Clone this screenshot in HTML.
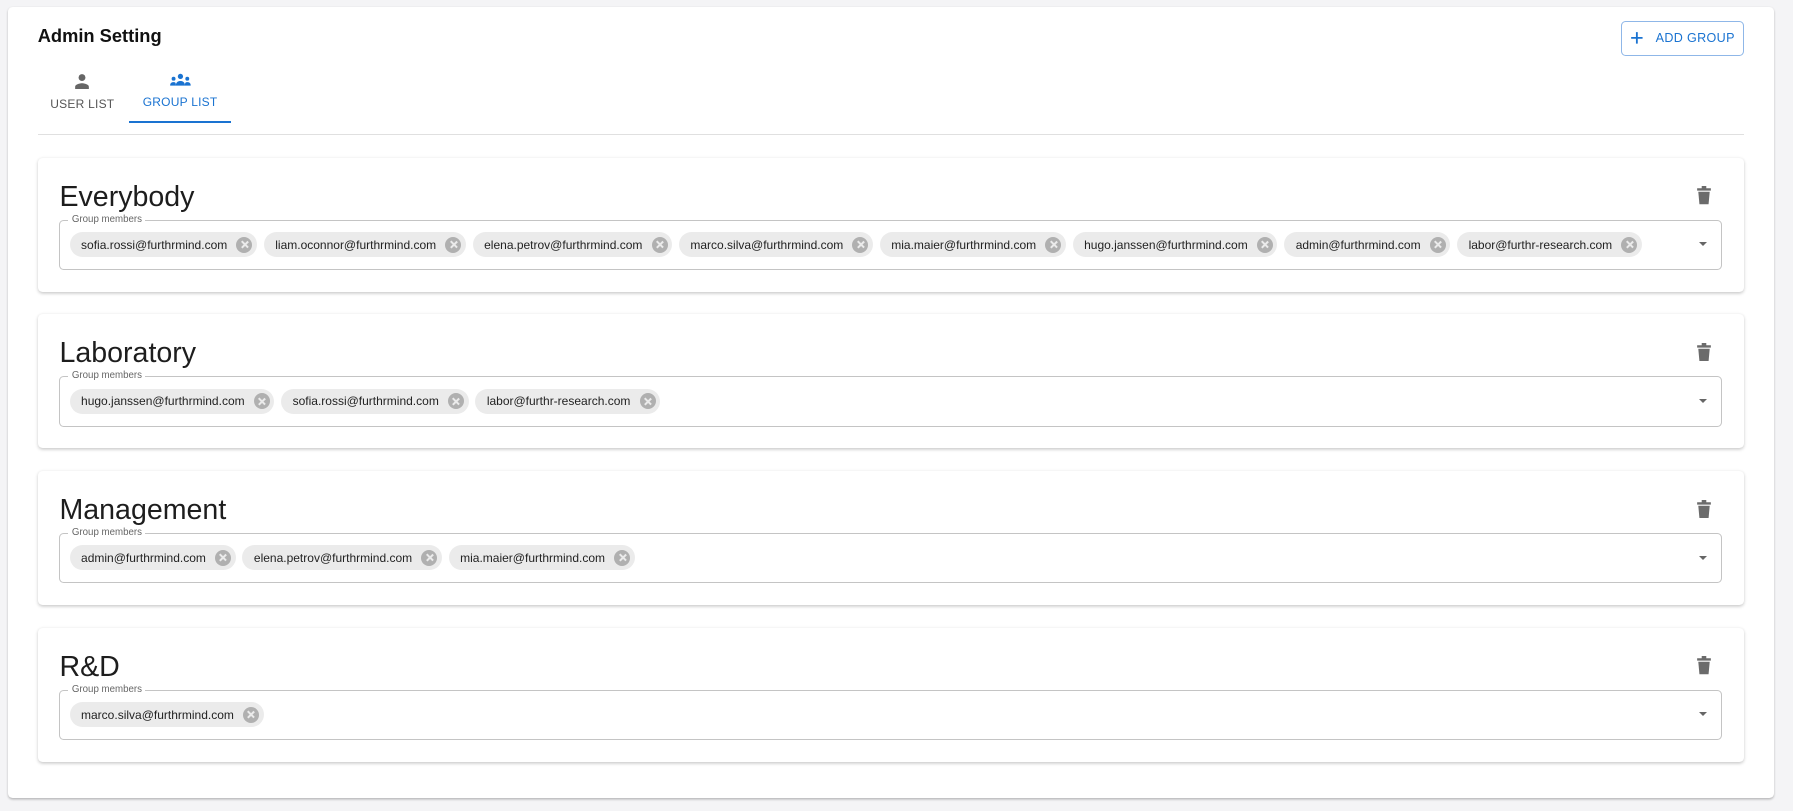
<!DOCTYPE html>
<html><head><meta charset="utf-8">
<style>
html,body{margin:0;padding:0;}
body{width:1793px;height:811px;overflow:hidden;background:#f4f4f6;font-family:"Liberation Sans",Arial,sans-serif;}
.main{position:absolute;left:7px;top:6px;width:1544px;height:692px;background:#fff;border-radius:4px;box-shadow:0 1px 2px rgba(0,0,0,.25);}
.title{position:absolute;left:26px;top:16px;font-size:16px;font-weight:bold;color:#111;}
.btn{position:absolute;left:1411px;top:12px;width:107px;height:31px;border:1px solid #8fb7e8;border-radius:4px;color:#1a73d1;font-size:11px;display:flex;align-items:center;justify-content:center;gap:10px;letter-spacing:.3px;box-sizing:border-box;}
.tab{position:absolute;top:53px;height:51px;text-align:center;font-size:10.5px;letter-spacing:.2px;}
.tab svg{display:block;margin:5px auto 7px;}
.divider{position:absolute;left:26px;top:111px;width:1492px;height:1px;background:#e0e0e0;}
.gcard{position:absolute;left:26px;width:1492px;height:117px;background:#fff;border-radius:4px;box-shadow:0 1px 3px rgba(0,0,0,.22);}
.gname{position:absolute;left:19px;top:20px;font-size:25px;color:#1d1d1d;}
.trash{position:absolute;left:1450px;top:25px;}
.fs{position:absolute;left:19px;top:54px;width:1454px;height:44px;border:1px solid #c4c4c4;border-radius:4px;box-sizing:border-box;}
.lbl{position:absolute;left:7px;top:-6px;background:#fff;padding:0 3px;font-size:8.5px;color:#666;line-height:10px;}
.chips{position:absolute;left:8px;top:10px;display:flex;gap:6px;}
.chip{height:22px;border-radius:11px;background:#ebebeb;display:flex;align-items:center;padding-left:10px;padding-right:4px;font-size:10.5px;color:#222;white-space:nowrap;}
.x{width:14px;height:14px;border-radius:50%;background:#b0b0b0;margin-left:8px;position:relative;}
.x:before,.x:after{content:"";position:absolute;left:6.5px;top:3px;width:1.4px;height:8px;background:#ebebeb;transform:rotate(45deg);}
.x:after{transform:rotate(-45deg);}
.arr{position:absolute;right:12px;top:19px;width:0;height:0;border-left:4px solid transparent;border-right:4px solid transparent;border-top:4px solid #666;}
</style></head><body>
<div style="position:absolute;left:0;top:0;zoom:1.1435;width:1568px;height:709px;">
<div class="main">
<div class="title">Admin Setting</div>
<div class="btn"><svg width="12" height="12" viewBox="0 0 12 12"><path d="M6 1v10M1 6h10" stroke="#1a73d1" stroke-width="1.6"/></svg>ADD GROUP</div>
<div class="tab" style="left:35px;width:60px;color:#555;">
<svg width="14" height="14" viewBox="0 0 14 14"><circle cx="7" cy="4" r="3" fill="#666"/><path d="M1 14v-2c0-2 4-3 6-3s6 1 6 3v2z" fill="#666"/></svg>USER LIST</div>
<div class="tab" style="left:106px;width:89px;color:#1a73d1;border-bottom:2px solid #1a73d1;box-sizing:border-box;height:49px;">
<svg width="20" height="12" viewBox="0 0 20 12"><circle cx="10" cy="3" r="2.3" fill="#1a73d1"/><circle cx="4" cy="5" r="1.7" fill="#1a73d1"/><circle cx="16" cy="5" r="1.7" fill="#1a73d1"/><path d="M6 11c0-3 2-4 4-4s4 1 4 4z M1 11c0-2 1-3 3-3s2 1 2 3z M14 11c0-2 0-3 2-3s3 1 3 3z" fill="#1a73d1"/></svg>GROUP LIST</div>
<div class="divider"></div>
</div>

<div class="gcard" style="left:33px;top:138px;">
<div class="gname">Everybody</div>
<svg class="trash" width="14" height="16" viewBox="0 0 14 16"><path d="M1 2h12v2H1z M5 0h4v2H5z M2 5h10l-1 11H3z" fill="#6b6b6b"/></svg>
<div class="fs"><div class="lbl">Group members</div><div class="chips">
<div class="chip">sofia.rossi@furthrmind.com<span class="x"></span></div>
<div class="chip">liam.oconnor@furthrmind.com<span class="x"></span></div>
<div class="chip">elena.petrov@furthrmind.com<span class="x"></span></div>
<div class="chip">marco.silva@furthrmind.com<span class="x"></span></div>
<div class="chip">mia.maier@furthrmind.com<span class="x"></span></div>
<div class="chip">hugo.janssen@furthrmind.com<span class="x"></span></div>
<div class="chip">admin@furthrmind.com<span class="x"></span></div>
<div class="chip">labor@furthr-research.com<span class="x"></span></div>
</div><div class="arr"></div></div></div>

<div class="gcard" style="left:33px;top:275px;">
<div class="gname">Laboratory</div>
<svg class="trash" width="14" height="16" viewBox="0 0 14 16"><path d="M1 2h12v2H1z M5 0h4v2H5z M2 5h10l-1 11H3z" fill="#6b6b6b"/></svg>
<div class="fs"><div class="lbl">Group members</div><div class="chips">
<div class="chip">hugo.janssen@furthrmind.com<span class="x"></span></div>
<div class="chip">sofia.rossi@furthrmind.com<span class="x"></span></div>
<div class="chip">labor@furthr-research.com<span class="x"></span></div>
</div><div class="arr"></div></div></div>

<div class="gcard" style="left:33px;top:412px;">
<div class="gname">Management</div>
<svg class="trash" width="14" height="16" viewBox="0 0 14 16"><path d="M1 2h12v2H1z M5 0h4v2H5z M2 5h10l-1 11H3z" fill="#6b6b6b"/></svg>
<div class="fs"><div class="lbl">Group members</div><div class="chips">
<div class="chip">admin@furthrmind.com<span class="x"></span></div>
<div class="chip">elena.petrov@furthrmind.com<span class="x"></span></div>
<div class="chip">mia.maier@furthrmind.com<span class="x"></span></div>
</div><div class="arr"></div></div></div>

<div class="gcard" style="left:33px;top:549px;">
<div class="gname">R&amp;D</div>
<svg class="trash" width="14" height="16" viewBox="0 0 14 16"><path d="M1 2h12v2H1z M5 0h4v2H5z M2 5h10l-1 11H3z" fill="#6b6b6b"/></svg>
<div class="fs"><div class="lbl">Group members</div><div class="chips">
<div class="chip">marco.silva@furthrmind.com<span class="x"></span></div>
</div><div class="arr"></div></div></div>
</div>
</body></html>
